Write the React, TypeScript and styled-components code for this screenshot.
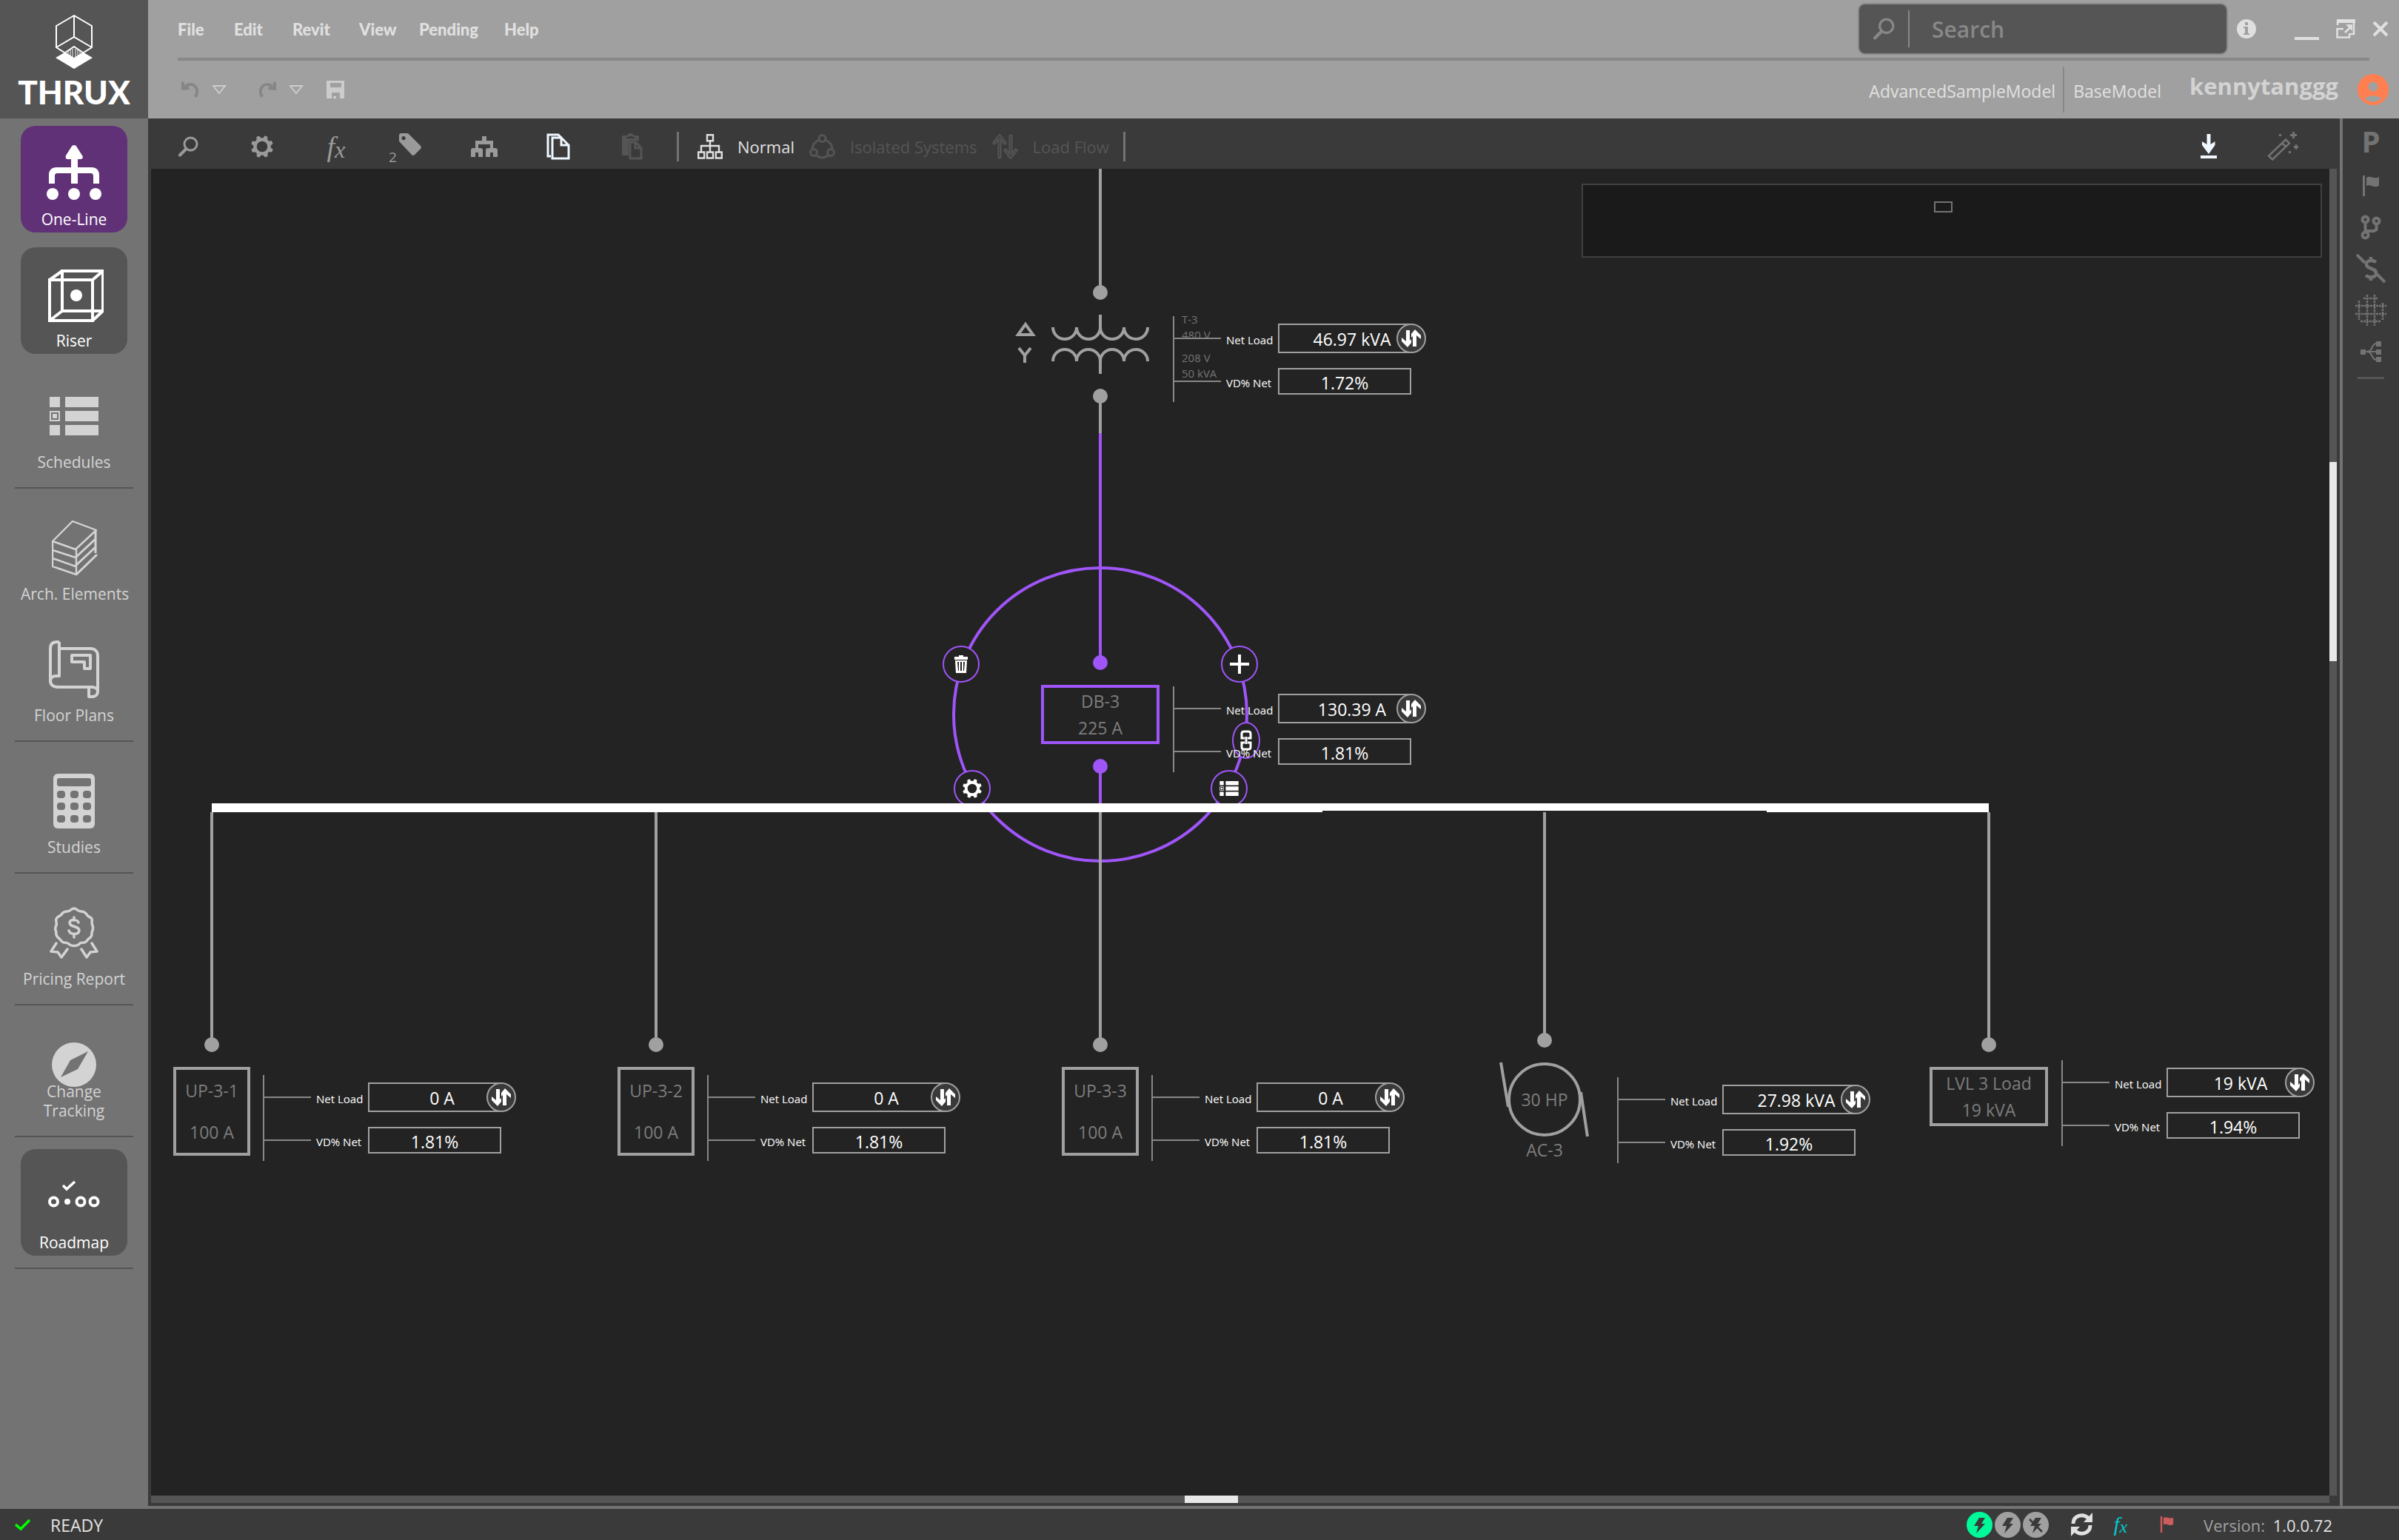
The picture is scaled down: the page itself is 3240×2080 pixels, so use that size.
import { ReactNode } from "react";
import styled, { createGlobalStyle } from "styled-components";

const GlobalStyle = createGlobalStyle`
  * {
    box-sizing: border-box;
  }

  body {
    margin: 0;
    background: #232323;
    font-family: "Open Sans", "Noto Sans", sans-serif;
    font-size: 23px;
    color: #e0e0e0;
  }

  button {
    border: 0;
    padding: 0;
    background: none;
    color: inherit;
    font: inherit;
    cursor: pointer;
  }

  svg {
    display: block;
    flex-shrink: 0;
  }
`;

const PURPLE = "#9f55f8";
const WIRE = "#a0a0a0";

/* ---------- page frame ---------- */

const Page = styled.div`
  display: grid;
  grid-template-columns: 200px 1fr;
  grid-template-rows: 160px 1fr auto;
  min-height: 100vh;
`;

const Brand = styled.a`
  display: flex;
  flex-direction: column;
  align-items: center;
  gap: 6px;
  padding-top: 20px;
  background: #555555;
  color: white;
  text-decoration: none;
`;

const BrandName = styled.span`
  font-family: Lato, sans-serif;
  font-size: 44px;
  font-weight: 900;
  line-height: 48px;
`;

const Header = styled.header`
  display: flex;
  flex-direction: column;
  background: #a0a0a0;
`;

const HeaderTop = styled.div`
  display: flex;
  align-items: center;
  height: 78px;
  padding: 0 14px 0 40px;
`;

const HeaderRule = styled.div`
  height: 4px;
  margin: 0 40px;
  background: #888888;
`;

const HeaderBottom = styled.div`
  display: flex;
  align-items: center;
  flex: 1;
  padding: 0 14px 0 45px;
`;

const Spacer = styled.div`
  flex: 1;
`;

const Menu = styled.nav`
  display: grid;
  grid-template-columns: 76px 79px 90px 81px 115px auto;
`;

const MenuButton = styled.button`
  font-family: Lato, sans-serif;
  font-size: 22px;
  font-weight: 900;
  text-align: left;
`;

const SearchBox = styled.label`
  display: flex;
  align-items: center;
  width: 500px;
  height: 70px;
  padding-left: 18px;
  border: 2px solid #888888;
  border-radius: 10px;
  background: #555555;
  color: #888888;
`;

const SearchInput = styled.input`
  flex: 1;
  min-width: 0;
  height: 50px;
  margin-left: 18px;
  padding: 0 30px;
  border: 0;
  border-left: 2px solid #888888;
  outline: none;
  background: none;
  color: #e0e0e0;
  font: inherit;
  font-size: 30px;
  font-weight: 600;

  &::placeholder {
    color: #888888;
    opacity: 1;
  }
`;

const WindowButtons = styled.div`
  display: flex;
  align-items: center;
  gap: 23px;
  margin-left: 12px;
`;

const InfoButton = styled.button`
  margin-right: 29px;
`;

const QuickButton = styled.button<{ $gap: number; $dim?: boolean }>`
  margin-right: ${({ $gap }) => $gap}px;
  color: ${({ $dim }) => ($dim ? "#868686" : "#cccccc")};
`;

const ModelLink = styled.a`
  padding: 4px 10px 0 12px;
  color: #e0e0e0;
  line-height: 58px;
  text-decoration: none;

  & + & {
    border-left: 2px solid #888888;
  }
`;

const UserName = styled.span`
  margin: 0 26px 10px 28px;
  color: #d3d3d3;
  font-size: 31px;
  font-weight: 700;
`;

/* ---------- sidebar ---------- */

const Sidebar = styled.nav`
  display: flex;
  flex-direction: column;
  padding-top: 10px;
  background: #737373;
`;

const SidebarGroup = styled.div`
  display: grid;
  justify-items: center;
  gap: 20px;
  margin: 0 20px 16px;
  padding-bottom: 16px;
  border-bottom: 2px solid #555555;
`;

const Tile = styled.button<{ $fill?: string }>`
  display: grid;
  width: 144px;
  height: 144px;
  padding: 24px 0 5px;
  border-radius: 20px;
  background: ${({ $fill }) => $fill || "transparent"};
  color: ${({ $fill }) => ($fill ? "white" : "#d3d3d3")};
  font-size: 21px;
  line-height: 26px;

  & > * {
    grid-area: 1 / 1;
    justify-self: center;
  }

  & > svg {
    height: 80px;
  }

  & > span {
    align-self: end;
    white-space: pre;
  }
`;

/* ---------- workspace ---------- */

const Workspace = styled.main`
  display: grid;
  grid-template-columns: 1fr 80px;
  background: #3a3a3a;
`;

const Editor = styled.section`
  display: grid;
  grid-template-rows: 68px 1fr;
  padding: 0 4px 4px;
`;

const Toolbar = styled.div`
  display: flex;
  align-items: center;
  padding: 8px 23px 0 0;
  color: #9a9a9a;
`;

const ToolButton = styled.button<{ $tone?: string }>`
  display: flex;
  align-items: center;
  justify-content: center;
  width: 100px;
  height: 60px;
  color: ${({ $tone }) => $tone || "inherit"};
`;

const TagTool = styled(ToolButton)`
  align-items: flex-end;
  gap: 3px;
  height: 40px;
  padding-right: 14px;
  font-size: 19px;
  line-height: 12px;

  svg {
    margin-bottom: 8px;
  }
`;

const Modes = styled.div`
  display: flex;
  align-items: center;
  gap: 20px;
  height: 40px;
  margin-left: 10px;
  padding: 0 19px 0 25px;
  border: solid #737373;
  border-width: 0 3px;
  font-size: 22px;
`;

const ModeButton = styled.button`
  display: flex;
  align-items: center;
  gap: 20px;
  color: #e0e0e0;

  &:disabled {
    color: #555555;
  }
`;

const Fx = styled.span<{ $size: number }>`
  font-family: "Liberation Serif", serif;
  font-size: ${({ $size }) => $size}px;
  font-style: italic;
  line-height: 1;

  sub {
    font-size: 85%;
    line-height: 0;
    vertical-align: -2px;
  }
`;

const Stage = styled.div`
  display: grid;
  grid-template-columns: 1fr 10px;
  grid-template-rows: 1fr 10px;
`;

const Canvas = styled.div`
  position: relative;
  overflow: hidden;
  background: #232323;
`;

const ScrollTrack = styled.div<{ $axis: "x" | "y" }>`
  display: grid;
  background: #555555;
  ${({ $axis }) =>
    $axis === "y"
      ? "grid-template-rows: 396fr 269fr 1127fr;"
      : "grid-template-columns: 1396fr 72fr 1474fr;"}
`;

const ScrollThumb = styled.div<{ $axis: "x" | "y" }>`
  background: #e8e8e8;
  ${({ $axis }) => ($axis === "y" ? "grid-row: 2;" : "grid-column: 2;")}
`;

const RightRail = styled.aside`
  display: flex;
  flex-direction: column;
  align-items: center;
  gap: 4px;
  padding-top: 9px;
  border-left: 4px solid #737373;
  color: #737373;
`;

const RailButton = styled.button`
  display: grid;
  place-items: center;
  width: 52px;
  height: 52px;
`;

const PhaseButton = styled(RailButton)`
  padding-bottom: 8px;
  font-size: 40px;
  font-weight: 700;
  line-height: 44px;
`;

const RailRule = styled.hr`
  width: 36px;
  margin: 4px 0;
  border: 0;
  border-top: 3px solid #555555;
`;

/* ---------- diagram ---------- */

const Layer = styled.svg`
  position: absolute;
  left: 0;
  top: 0;
  width: 100%;
  height: 100%;
  overflow: visible;
  pointer-events: none;
`;

const RadialButton = styled.button<{ $x: number; $y: number; $narrow?: boolean }>`
  position: absolute;
  left: ${({ $x }) => $x}px;
  top: ${({ $y }) => $y}px;
  display: grid;
  place-items: center;
  width: ${({ $narrow }) => ($narrow ? 38 : 50)}px;
  height: 50px;
  border: 2px solid ${PURPLE};
  border-radius: 50%;
  background: #232323;
  color: white;
`;

const Device = styled.div<{ $x: number; $y: number; $tall?: boolean; $active?: boolean }>`
  position: absolute;
  left: ${({ $x }) => $x}px;
  top: ${({ $y }) => $y}px;
  display: grid;
  align-content: center;
  justify-items: center;
  width: ${({ $tall }) => ($tall ? 104 : 160)}px;
  height: ${({ $tall }) => ($tall ? 120 : 80)}px;
  border: 4px solid ${({ $active }) => ($active ? PURPLE : WIRE)};
  color: #7d7d7d;
  line-height: ${({ $tall }) => ($tall ? 56 : 36)}px;
  white-space: nowrap;
`;

const MotorText = styled.div`
  position: absolute;
  left: 1832px;
  top: 1223px;
  display: grid;
  justify-items: center;
  width: 100px;
  color: #7d7d7d;
  line-height: 68px;
`;

const TransformerText = styled.div`
  position: absolute;
  left: 1392px;
  top: 193px;
  color: #737373;
  font-size: 15px;
  line-height: 21px;

  p {
    margin: 0 0 10px;
  }
`;

const MeterBox = styled.dl<{ $x: number; $y: number }>`
  position: absolute;
  left: ${({ $x }) => $x}px;
  top: ${({ $y }) => $y}px;
  height: 116px;
  margin: 0;
  padding-top: 1px;
  border-left: 2px solid #888888;
`;

const MeterRow = styled.div`
  display: flex;
  align-items: center;
  height: 58px;

  &::before {
    content: "";
    width: 63px;
    border-top: 2px solid #888888;
  }
`;

const MeterLabel = styled.dt`
  width: 77px;
  padding: 3px 0 0 7px;
  color: white;
  font-size: 15px;
  white-space: nowrap;
`;

const MeterValue = styled.dd<{ $toggle?: boolean }>`
  display: grid;
  place-items: center;
  position: relative;
  width: 180px;
  height: ${({ $toggle }) => ($toggle ? 40 : 36)}px;
  margin: 0;
  padding: ${({ $toggle }) => ($toggle ? "2px 0 0 20px" : "2px 0 0")};
  border: 2px solid ${WIRE};
  color: white;
  line-height: 32px;
`;

const SwapButton = styled.button`
  position: absolute;
  right: -22px;
  top: -2px;
  display: grid;
  place-items: center;
  width: 40px;
  height: 40px;
  border: 2px solid ${WIRE};
  border-radius: 50%;
  background: #3a3a3a;
  color: white;
`;

const MiniMap = styled.div`
  position: absolute;
  top: 20px;
  right: 10px;
  width: 34%;
  height: 100px;
  border: 2px solid #404040;
  background: #1a1a1a;
`;

const MiniMapView = styled.div`
  position: absolute;
  left: 474px;
  top: 22px;
  width: 25px;
  height: 15px;
  border: 2px solid #737373;
`;

/* ---------- status bar ---------- */

const StatusBar = styled.footer`
  display: flex;
  align-items: center;
  grid-column: 1 / -1;
  height: 46px;
  padding: 0 90px 0 20px;
  border-top: 4px solid #737373;
  background: #3a3a3a;
`;

const StatusText = styled.span`
  margin-left: 27px;
  padding-top: 2px;
`;

const StatusIcons = styled.div`
  display: flex;
  align-items: center;
  gap: 3px;
  margin-right: 30px;
`;

const StatusSlot = styled.span<{ $color: string; $gap: number }>`
  margin-right: ${({ $gap }) => $gap}px;
  color: ${({ $color }) => $color};
`;

const Version = styled.span`
  padding-top: 2px;
  color: #a0a0a0;
  font-size: 22px;

  b {
    margin-left: 5px;
    color: #e0e0e0;
    font-weight: 400;
  }
`;

/* ---------- icons ---------- */

interface IconProps {
  size?: number;
}

interface SvgProps {
  w: number;
  h: number;
  width?: number;
  height?: number;
  children: ReactNode;
}

const Svg = ({ w, h, width, height, children }: SvgProps) => (
  <svg
    width={width || w}
    height={height || h}
    viewBox={`0 0 ${w} ${h}`}
    fill="currentColor"
    aria-hidden="true"
  >
    {children}
  </svg>
);

const Logo = () => (
  <Svg w={50} h={74}>
    <g fill="none" stroke="currentColor" strokeWidth="2">
      <path d="M25 1 1 15v29l24 15 24-15V15zM25 1v29M1 44l24-14 24 14" />
      <path d="M13 51l12-8 12 8" />
      <path d="M17 49v6M20 47v9M23 46v12M27 46v12M30 47v9M33 49v6" strokeWidth="1" />
    </g>
    <path d="M0 58l12-7 13 9 13-9 12 7-25 15z" />
  </Svg>
);

const SearchIcon = ({ size = 28 }: IconProps) => (
  <Svg w={28} h={28} width={size} height={size}>
    <g fill="none" stroke="currentColor" strokeWidth="3">
      <circle cx="17.5" cy="10.5" r="8.5" />
      <path d="M11.5 17 3 25.5" strokeWidth="4" strokeLinecap="round" />
    </g>
  </Svg>
);

const GearIcon = ({ size = 30 }: IconProps) => (
  <Svg w={30} h={30} width={size} height={size}>
    <circle cx="15" cy="15" r="9.5" fill="none" stroke="currentColor" strokeWidth="4.5" />
    {[0, 45, 90, 135, 180, 225, 270, 315].map((a) => (
      <path key={a} d="M11.5 5l1.5-5h4l1.5 5z" transform={`rotate(${a + 22} 15 15)`} />
    ))}
  </Svg>
);

const TagIcon = () => (
  <Svg w={30} h={30}>
    <path
      fillRule="evenodd"
      d="M0 3a3 3 0 0 1 3-3h7a4 4 0 0 1 3 1l16 16a3 3 0 0 1 0 4l-8 8a3 3 0 0 1-4 0L1 12a4 4 0 0 1-1-3zM6 4a2.6 2.6 0 1 0 .1 0z"
    />
  </Svg>
);

const TreeIcon = () => (
  <Svg w={36} h={28}>
    <path d="M15 0h6v6h9v10h3c2 0 3 1 3 3v9h-6v-6h-4v6h-6v-9c0-2 1-3 3-3h3v-5H10v5h3c2 0 3 1 3 3v9h-6v-6H6v6H0v-9c0-2 1-3 3-3h3V6h9z" />
  </Svg>
);

const CopyIcon = () => (
  <Svg w={32} h={36}>
    <g fill="none" stroke="currentColor" strokeWidth="3">
      <path d="M6 31H2V2h14l4 4" />
      <path d="M8 6h12l10 10v18H8zM20 6v10h10" />
    </g>
  </Svg>
);

const PasteIcon = () => (
  <Svg w={28} h={36}>
    <path d="M2 3h5c1-4 8-4 9 0h5a2 2 0 0 1 2 2v5H12a3 3 0 0 0-3 3v17H2a2 2 0 0 1-2-2V5a2 2 0 0 1 2-2z" />
    <path fill="none" stroke="currentColor" strokeWidth="3" d="M11 12h8l7 8v14H11zM18 12v8h8" />
    <path fill="#3a3a3a" d="M6 7h11v-2H14a3 3 0 0 0-5 0H6z" />
  </Svg>
);

const NetworkIcon = () => (
  <Svg w={34} h={34}>
    <path
      fill="none"
      stroke="currentColor"
      strokeWidth="2.4"
      d="M13 1.2h8v8h-8zM17 9v15M5 24v-8h24v8M1.2 24.5h8v8h-8zM13 24.5h8v8h-8zM24.8 24.5h8v8h-8z"
    />
  </Svg>
);

const IsolatedIcon = () => (
  <Svg w={35} h={34}>
    <g fill="none" stroke="currentColor" strokeWidth="3">
      <circle cx="17.5" cy="6" r="4.5" />
      <circle cx="6" cy="25" r="4.5" />
      <circle cx="29" cy="25" r="4.5" />
      <path d="M13 8C7 11 4 15 4 20.5M22 8c6 3 9 7 9 12.500M10 29c5 4 10 4 15 0" />
    </g>
  </Svg>
);

const FlowIcon = () => (
  <Svg w={35} h={34}>
    <g fill="none" stroke="currentColor" strokeLinecap="round" strokeLinejoin="round">
      <path strokeWidth="5" d="M10 31V3l-7 9M10 3l7 9M25 3v28l-7-9M25 31l7-9" />
      <path stroke="#3a3a3a" strokeWidth="1" d="M10 31V3l-7 9M10 3l7 9M25 3v28l-7-9M25 31l7-9" />
    </g>
  </Svg>
);

const DownloadIcon = () => (
  <Svg w={22} h={34}>
    <path d="M8.5 0h5v14l6-4v5L11 27 2 15v-5l6.5 4zM0 29h22v4H0z" />
  </Svg>
);

const WandIcon = () => (
  <Svg w={42} h={40}>
    <path
      fill="none"
      stroke="currentColor"
      strokeWidth="2.5"
      d="M25 10.5l5 5L7 37.5l-5-5zM20 15l5 5"
    />
    <path d="M34 0h3v3h3v3h-3v3h-3V6h-3V3h3zM38 17h2v2h2v3h-2v2h-2v-2h-2v-3h2zM16 3h3v3h-3zM29 26h3v3h-3z" />
  </Svg>
);

const UndoIcon = ({ flip }: { flip?: boolean }) => (
  <Svg w={24} h={22}>
    <g transform={flip ? "matrix(-1 0 0 1 24 0)" : undefined}>
      <path fill="none" stroke="currentColor" strokeWidth="4" d="M5 7C14-1 26 8 19 21" />
      <path d="M1 0l3 1v5l6 1 1 4-11 1V3z" />
    </g>
  </Svg>
);

const TriangleIcon = () => (
  <Svg w={20} h={13}>
    <path fill="none" stroke="currentColor" strokeWidth="2" d="M2 1h16l-8 10z" />
  </Svg>
);

const SaveIcon = () => (
  <Svg w={24} h={24}>
    <path fillRule="evenodd" d="M0 0h24v24H0zM5 3v6h15V3zM7 16v8h2v-3h4v3h5v-8z" />
  </Svg>
);

const InfoIcon = () => (
  <Svg w={26} h={26}>
    <circle cx="13" cy="13" r="13" />
    <path fill="#a0a0a0" d="M11 4h4v4h-4zM9 10h6v9h2v2H9v-2h2v-7H9z" />
  </Svg>
);

const MinimizeIcon = () => (
  <Svg w={33} h={30}>
    <path d="M0 26h33v4H0z" />
  </Svg>
);

const RestoreIcon = () => (
  <Svg w={26} h={26}>
    <path fill="none" stroke="currentColor" strokeWidth="2.5" d="M2 8V3h22v17h-5M10 13H1.5v11.5H18V19" />
    <path d="M1 0h25v5H1zM13 7h9v9l-3-3-6 6-2-2 6-6z" />
  </Svg>
);

const CloseIcon = () => (
  <Svg w={22} h={20}>
    <path fill="none" stroke="currentColor" strokeWidth="4" d="M2 1l18 18M20 1 2 19" />
  </Svg>
);

const AvatarIcon = () => (
  <Svg w={42} h={42}>
    <circle cx="21" cy="21" r="21" fill="#ff7f50" />
    <circle cx="21" cy="17" r="6.5" fill="#a0a0a0" />
    <path fill="#a0a0a0" d="M10 33c4-5 18-5 22 0-5 6-17 6-22 0z" />
  </Svg>
);

const OneLineIcon = () => (
  <Svg w={80} h={80}>
    <path d="M40 2c2 0 3 1 4 3l7 11c2 3 0 5-3 5h-3v11h19c6 0 10 4 10 10v12h-8V44c0-3-1-4-4-4H45v14h-9V40H18c-3 0-4 1-4 4v10H6V42c0-6 4-10 10-10h20V21h-4c-3 0-4-2-3-5l7-11c1-2 2-3 4-3z" />
    <circle cx="11" cy="68" r="8" />
    <circle cx="40" cy="68" r="8" />
    <circle cx="69" cy="68" r="8" />
  </Svg>
);

const RiserIcon = () => (
  <Svg w={80} h={80}>
    <path
      fill="none"
      stroke="currentColor"
      strokeWidth="4"
      d="M7 20h58v55H7zM24 8h55v54H24zM7 20 24 8M65 20 79 8M7 75l17-13M65 75l14-13"
    />
    <circle cx="43" cy="41" r="8" />
  </Svg>
);

const ListIcon = ({ size = 66 }: IconProps) => (
  <Svg w={66} h={52} width={size} height={Math.round((size * 52) / 66)}>
    <path d="M0 0h14v14H0zM21 0h45v14H21zM21 19h45v14H21zM0 38h14v14H0zM21 38h45v14H21z" />
    <path fillRule="evenodd" d="M0 19h14v14H0zM2 21v10h10V21z" />
    <path d="M4 23h6v6H4z" />
  </Svg>
);

const ArchIcon = () => (
  <Svg w={62} h={74}>
    <g fill="none" stroke="currentColor" strokeWidth="2.4" strokeLinejoin="round">
      <path d="M1 28 28 1l32 12-28 26zM1 28v34l32 11V39M1 40l31 10M1 51l31 11" />
      <path d="M32 50l28-26M32 61l28-26M33 73l28-27M59 14v30" strokeWidth="3" />
    </g>
  </Svg>
);

const FloorIcon = () => (
  <Svg w={68} h={78}>
    <path
      fill="none"
      stroke="currentColor"
      strokeWidth="4"
      strokeLinejoin="round"
      d="M14 2h-3C5 2 2 5 2 11v43c0 6 4 9 10 9h46M14 2v46h-4c-5 0-8 2-8 7M14 11h42c6 0 10 4 10 10v47M14 2v9M54 63v13h4c5 0 8-3 8-7 0-4-4-6-8-6M31 20h25v18H48v-9H31z"
    />
  </Svg>
);

const CalcIcon = () => (
  <Svg w={56} h={74}>
    <rect width="56" height="74" rx="6" />
    <g fill="#737373">
      <rect x="5" y="6" width="46" height="11" rx="3" />
      {[23, 39, 56].map((y) =>
        [5, 23, 40].map((x) => <rect key={`${x}-${y}`} x={x} y={y} width="11" height="10" rx="4" />)
      )}
    </g>
  </Svg>
);

const PricingIcon = () => (
  <Svg w={66} h={70}>
    <g fill="none" stroke="currentColor" strokeWidth="3.5" strokeLinejoin="round" strokeLinecap="round">
      <path d="M33 2c4 0 5 4 9 4s6 1 8 4c1 3 5 3 7 6 1 4-1 6 1 9 1 4 1 6-1 9 0 4 0 6-3 8-3 1-3 5-7 6-4 0-6 0-8 3-4 2-8 2-12 0-2-3-5-3-8-3-4-1-4-5-7-6-3-3-4-5-3-8-2-4-2-6 0-9 1-4-1-6 0-9 2-4 5-3 7-6 2-3 4-4 8-4s5-4 9-4z" />
      <path d="M9 49 2 60l9 1 5 7 8-11M57 49l7 11-9 1-5 7-7-11" />
      <path d="M39 21c-1-4-11-5-12 0 0 7 13 4 13 11-1 6-12 6-14 0M33 14v4M33 37v4" />
    </g>
  </Svg>
);

const CompassIcon = () => (
  <Svg w={60} h={80}>
    <circle cx="30" cy="40" r="30" />
    <path fill="#737373" d="M49 22 35 46 12 57l13-23z" />
  </Svg>
);

const RoadmapIcon = () => (
  <Svg w={70} h={80}>
    <g fill="none" stroke="currentColor" strokeWidth="4">
      <path d="M20 25l5 5 11-10" strokeWidth="3.5" />
      <circle cx="7.5" cy="47" r="5.5" />
      <circle cx="44" cy="47" r="5.5" />
      <circle cx="62" cy="47" r="5.5" />
    </g>
    <circle cx="26" cy="47" r="4" />
  </Svg>
);

const FlagIcon = ({ size = 28 }: IconProps) => (
  <Svg w={24} h={28} width={Math.round((size * 24) / 28)} height={size}>
    <path d="M1 0h3v28H1zM6 3c6-4 9 3 17-1v12c-8 4-11-3-17 0z" />
  </Svg>
);

const BranchIcon = () => (
  <Svg w={28} h={34}>
    <g fill="none" stroke="currentColor" strokeWidth="4">
      <circle cx="6.5" cy="6.5" r="4" />
      <circle cx="21.5" cy="8.5" r="4" />
      <circle cx="6.5" cy="27.5" r="4" />
      <path d="M6.5 11v12M21.5 13v7l-3 2H7" />
    </g>
  </Svg>
);

const NoCostIcon = () => (
  <Svg w={40} h={40}>
    <g fill="none" stroke="currentColor" strokeWidth="4">
      <path d="M1 1l11 11M28 27l11 11" />
      <path d="M27 11c-4-3-13-3-13 3 0 7 13 4 13 12 0 7-10 6-14 3M20 4v6M20 30v6" strokeWidth="4.5" />
    </g>
  </Svg>
);

const GlobeGridIcon = () => (
  <Svg w={42} h={42}>
    <path
      fill="none"
      stroke="currentColor"
      strokeWidth="2.5"
      strokeDasharray="3 1"
      d="M11 5h20M0 15h42M0 26h42M7 36h28M5 8v26M16 0v42M26 0v42M37 11v23"
    />
  </Svg>
);

const SplitIcon = () => (
  <Svg w={28} h={28}>
    <path d="M0 11h7v7H0zM21 0h7v7h-7zM21 11h7v7h-7zM21 21h7v7h-7z" />
    <path fill="none" stroke="currentColor" strokeWidth="2" d="M7 14h14M9 14c8 0 5-10 12-11M9 14c8 0 5 10 12 11" />
  </Svg>
);

const TrashIcon = () => (
  <Svg w={18} h={24}>
    <path fillRule="evenodd" d="M6 0h6v2h6v4H0V2h6zM1 7h16l-1 17H2zM4 9l1 12h1V9zM8 9v12h2V9zM12 9v12h1l1-12z" />
  </Svg>
);

const PlusIcon = () => (
  <Svg w={26} h={26}>
    <path d="M11 0h4v11h11v4H15v11h-4V15H0v-4h11z" />
  </Svg>
);

const LinkIcon = () => (
  <Svg w={16} h={28}>
    <path
      fill="none"
      stroke="currentColor"
      strokeWidth="3"
      d="M6 11H2V5c0-2 1-3 3-3h6c2 0 3 1 3 3v6h-4M6 17H2v6c0 2 1 3 3 3h6c2 0 3-1 3-3v-6h-4M8 9v10"
    />
  </Svg>
);

const SwapIcon = () => (
  <Svg w={26} h={26}>
    <path d="M6 2h5v14l2-2v5l-5 6-8-8v-5l6 5zM15 24V10l-2 2V7l5-6 8 8v5l-6-5v15z" />
  </Svg>
);

const CheckIcon = () => (
  <Svg w={21} h={17}>
    <path fill="none" stroke="#00ff00" strokeWidth="3.5" d="M1 8l7 6L20 2" />
  </Svg>
);

const BoltIcon = ({ color, off }: { color: string; off?: boolean }) => (
  <Svg w={35} h={35}>
    <circle cx="17.5" cy="17.5" r="17.5" fill={color} />
    <path fill="#3a3a3a" d="M17 8h8l-5 8h5L13 29l3-10h-6z" />
    {off && <path stroke="#3a3a3a" strokeWidth="2.5" d="M9 10l5 5M20 21l6 6" />}
  </Svg>
);

const RefreshIcon = () => (
  <Svg w={29} h={32}>
    <g fill="none" stroke="currentColor" strokeWidth="5">
      <path d="M3 15C3 4 16 0 24 8M26 17c0 11-13 15-21 7" />
    </g>
    <path d="M29 0v13H17zM0 32V19h12z" />
  </Svg>
);

/* ---------- data ---------- */

const meters = [
  { id: "T-3", x: 1380, y: 199, load: "46.97 kVA", drop: "1.72%" },
  { id: "DB-3", x: 1380, y: 699, load: "130.39 A", drop: "1.81%" },
  { id: "UP-3-1", x: 151, y: 1224, load: "0 A", drop: "1.81%" },
  { id: "UP-3-2", x: 751, y: 1224, load: "0 A", drop: "1.81%" },
  { id: "UP-3-3", x: 1351, y: 1224, load: "0 A", drop: "1.81%" },
  { id: "AC-3", x: 1980, y: 1227, load: "27.98 kVA", drop: "1.92%" },
  { id: "LVL 3", x: 2580, y: 1204, load: "19 kVA", drop: "1.94%" },
];

const panels = [
  { name: "UP-3-1", x: 30 },
  { name: "UP-3-2", x: 630 },
  { name: "UP-3-3", x: 1230 },
];

const feeders = [
  { x: 82, end: 1183 },
  { x: 682, end: 1183 },
  { x: 1282, end: 1183 },
  { x: 1882, end: 1177 },
  { x: 2482, end: 1183 },
];

const Meter = ({ id, x, y, load, drop }: (typeof meters)[number]) => (
  <MeterBox $x={x} $y={y}>
    <MeterRow>
      <MeterLabel>Net Load</MeterLabel>
      <MeterValue $toggle>
        {load}
        <SwapButton aria-label={`Switch units of ${id}`}>
          <SwapIcon />
        </SwapButton>
      </MeterValue>
    </MeterRow>
    <MeterRow>
      <MeterLabel>VD% Net</MeterLabel>
      <MeterValue>{drop}</MeterValue>
    </MeterRow>
  </MeterBox>
);

const Wires = () => (
  <Layer>
    <g stroke={WIRE} strokeWidth="4" fill="none">
      <path d="M1282 0v167M1282 307v50" />
      {feeders.map(({ x, end }) => (
        <path key={x} d={`M${x} 869V${end}`} />
      ))}
      {/* transformer windings */}
      <path d="M1282 197v17M1218 214a16 16 0 0 0 32 0a16 16 0 0 0 32 0a16 16 0 0 0 32 0a16 16 0 0 0 32 0" />
      <path d="M1282 260v17M1218 260a16 16 0 0 1 32 0a16 16 0 0 1 32 0a16 16 0 0 1 32 0a16 16 0 0 1 32 0" />
      <path d="M1171 224l10-14 10 14z" strokeWidth="4" />
      <path d="M1172 242l8 10 8-10M1180 251v11" />
      {/* motor */}
      <circle cx="1882" cy="1257" r="48" />
      <path d="M1823 1207l10 60M1931 1247l9 60" />
    </g>
    <g fill={WIRE}>
      <circle cx="1282" cy="167" r="10" />
      <circle cx="1282" cy="307" r="10" />
      {feeders.map(({ x, end }) => (
        <circle key={x} cx={x} cy={end} r="10" />
      ))}
    </g>
    <path d="M1282 357v310M1282 807v50" stroke={PURPLE} strokeWidth="4" />
    <g fill={PURPLE}>
      <circle cx="1282" cy="667" r="10" />
      <circle cx="1282" cy="807" r="10" />
    </g>
    <path d="M82 857h2400v12h-300v-2h-600v2H82z" fill="white" />
  </Layer>
);

const Diagram = () => (
  <Canvas>
    <Layer>
      <circle cx="1282" cy="737" r="198" fill="none" stroke={PURPLE} strokeWidth="4" />
    </Layer>
    <RadialButton $x={1069} $y={644} aria-label="Delete">
      <TrashIcon />
    </RadialButton>
    <RadialButton $x={1445} $y={644} aria-label="Add">
      <PlusIcon />
    </RadialButton>
    <RadialButton $x={1460} $y={747} $narrow aria-label="Link">
      <LinkIcon />
    </RadialButton>
    <RadialButton $x={1084} $y={812} aria-label="Settings">
      <GearIcon size={26} />
    </RadialButton>
    <RadialButton $x={1431} $y={812} aria-label="Schedule">
      <ListIcon size={26} />
    </RadialButton>
    <Wires />
    <TransformerText>
      <p>
        T-3
        <br />
        480 V
      </p>
      <p>
        208 V
        <br />
        50 kVA
      </p>
    </TransformerText>
    <Device $x={1202} $y={697} $active>
      <span>DB-3</span>
      <span>225 A</span>
    </Device>
    {panels.map(({ name, x }) => (
      <Device key={name} $x={x} $y={1213} $tall>
        <span>{name}</span>
        <span>100 A</span>
      </Device>
    ))}
    <MotorText>
      <span>30 HP</span>
      <span>AC-3</span>
    </MotorText>
    <Device $x={2402} $y={1213}>
      <span>LVL 3 Load</span>
      <span>19 kVA</span>
    </Device>
    {meters.map((meter) => (
      <Meter key={meter.id} {...meter} />
    ))}
    <MiniMap>
      <MiniMapView />
    </MiniMap>
  </Canvas>
);

const App = () => {
  return (
    <Page>
      <GlobalStyle />
      <Brand href="#home">
        <Logo />
        <BrandName>THRUX</BrandName>
      </Brand>

      <Header>
        <HeaderTop>
          <Menu>
            {["File", "Edit", "Revit", "View", "Pending", "Help"].map((name) => (
              <MenuButton key={name}>{name}</MenuButton>
            ))}
          </Menu>
          <Spacer />
          <SearchBox htmlFor="search">
            <SearchIcon size={30} />
            <SearchInput id="search" type="text" placeholder="Search" aria-label="Search" />
          </SearchBox>
          <WindowButtons>
            <InfoButton aria-label="Info">
              <InfoIcon />
            </InfoButton>
            <button aria-label="Minimize">
              <MinimizeIcon />
            </button>
            <button aria-label="Restore">
              <RestoreIcon />
            </button>
            <button aria-label="Close">
              <CloseIcon />
            </button>
          </WindowButtons>
        </HeaderTop>
        <HeaderRule />
        <HeaderBottom>
          <QuickButton $gap={17} $dim aria-label="Undo">
            <UndoIcon />
          </QuickButton>
          <QuickButton $gap={43} aria-label="Undo history">
            <TriangleIcon />
          </QuickButton>
          <QuickButton $gap={17} $dim aria-label="Redo">
            <UndoIcon flip />
          </QuickButton>
          <QuickButton $gap={31} aria-label="Redo history">
            <TriangleIcon />
          </QuickButton>
          <QuickButton $gap={0} aria-label="Save">
            <SaveIcon />
          </QuickButton>
          <Spacer />
          <ModelLink href="#advanced">AdvancedSampleModel</ModelLink>
          <ModelLink href="#base">BaseModel</ModelLink>
          <UserName>kennytanggg</UserName>
          <button aria-label="Account">
            <AvatarIcon />
          </button>
        </HeaderBottom>
      </Header>

      <Sidebar>
        <SidebarGroup>
          <Tile $fill="#613178">
            <OneLineIcon />
            <span>One-Line</span>
          </Tile>
          <Tile $fill="#555555">
            <RiserIcon />
            <span>Riser</span>
          </Tile>
          <Tile>
            <ListIcon />
            <span>Schedules</span>
          </Tile>
        </SidebarGroup>
        <SidebarGroup>
          <Tile>
            <ArchIcon />
            <span>Arch. Elements</span>
          </Tile>
          <Tile>
            <FloorIcon />
            <span>Floor Plans</span>
          </Tile>
        </SidebarGroup>
        <SidebarGroup>
          <Tile>
            <CalcIcon />
            <span>Studies</span>
          </Tile>
        </SidebarGroup>
        <SidebarGroup>
          <Tile>
            <PricingIcon />
            <span>Pricing Report</span>
          </Tile>
        </SidebarGroup>
        <SidebarGroup>
          <Tile>
            <CompassIcon />
            <span>{"Change\nTracking"}</span>
          </Tile>
        </SidebarGroup>
        <SidebarGroup>
          <Tile $fill="#555555">
            <RoadmapIcon />
            <span>Roadmap</span>
          </Tile>
        </SidebarGroup>
      </Sidebar>

      <Workspace>
        <Editor>
          <Toolbar>
            <ToolButton aria-label="Find">
              <SearchIcon />
            </ToolButton>
            <ToolButton aria-label="Settings">
              <GearIcon />
            </ToolButton>
            <ToolButton aria-label="Formula">
              <Fx $size={38}>
                f<sub>x</sub>
              </Fx>
            </ToolButton>
            <TagTool aria-label="Tags">
              2
              <TagIcon />
            </TagTool>
            <ToolButton aria-label="Arrange">
              <TreeIcon />
            </ToolButton>
            <ToolButton $tone="#f0f8ff" aria-label="Copy">
              <CopyIcon />
            </ToolButton>
            <ToolButton $tone="#555555" aria-label="Paste" disabled>
              <PasteIcon />
            </ToolButton>
            <Modes>
              <ModeButton>
                <NetworkIcon />
                Normal
              </ModeButton>
              <ModeButton disabled>
                <IsolatedIcon />
                Isolated Systems
              </ModeButton>
              <ModeButton disabled>
                <FlowIcon />
                Load Flow
              </ModeButton>
            </Modes>
            <Spacer />
            <ToolButton $tone="#f0f8ff" aria-label="Download">
              <DownloadIcon />
            </ToolButton>
            <ToolButton $tone="#737373" aria-label="Auto layout">
              <WandIcon />
            </ToolButton>
          </Toolbar>
          <Stage>
            <Diagram />
            <ScrollTrack $axis="y">
              <ScrollThumb $axis="y" />
            </ScrollTrack>
            <ScrollTrack $axis="x">
              <ScrollThumb $axis="x" />
            </ScrollTrack>
          </Stage>
        </Editor>
        <RightRail>
          <PhaseButton>P</PhaseButton>
          <RailButton aria-label="Flags">
            <FlagIcon />
          </RailButton>
          <RailButton aria-label="Branches">
            <BranchIcon />
          </RailButton>
          <RailButton aria-label="Hide cost">
            <NoCostIcon />
          </RailButton>
          <RailButton aria-label="Grid">
            <GlobeGridIcon />
          </RailButton>
          <RailButton aria-label="Hierarchy">
            <SplitIcon />
          </RailButton>
          <RailRule />
        </RightRail>
      </Workspace>

      <StatusBar>
        <CheckIcon />
        <StatusText>READY</StatusText>
        <Spacer />
        <StatusIcons>
          <BoltIcon color="#00fa9a" />
          <BoltIcon color="#a0a0a0" />
          <BoltIcon color="#a0a0a0" off />
        </StatusIcons>
        <StatusSlot $color="#e0e0e0" $gap={29}>
          <RefreshIcon />
        </StatusSlot>
        <StatusSlot $color="#00ced1" $gap={44}>
          <Fx $size={28}>
            f<sub>x</sub>
          </Fx>
        </StatusSlot>
        <StatusSlot $color="#cd5c5c" $gap={40}>
          <FlagIcon size={22} />
        </StatusSlot>
        <Version>
          Version: <b>1.0.0.72</b>
        </Version>
      </StatusBar>
    </Page>
  );
};

export default App;
